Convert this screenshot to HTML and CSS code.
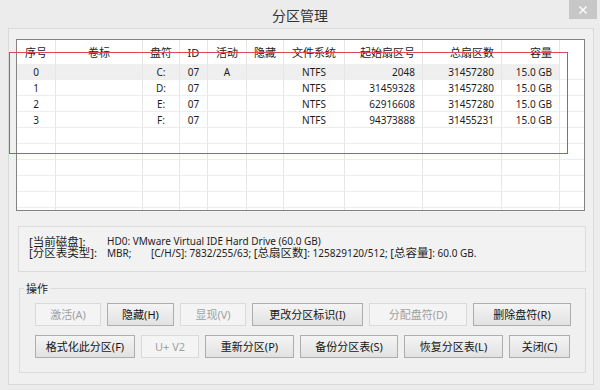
FILE: index.html
```html
<!DOCTYPE html>
<html lang="zh-CN">
<head>
<meta charset="utf-8">
<title>分区管理</title>
<link rel="stylesheet" href="styles.css">
</head>
<body>
<div class="window">
  <header class="titlebar">
    <h1 class="title">分区管理</h1>
    <button class="close" aria-label="关闭"><svg width="10" height="10" viewBox="0 0 10 10"><path d="M1.5 1.5L8.5 8.5M8.5 1.5L1.5 8.5" stroke="#fff" stroke-width="1.4" fill="none"/></svg></button>
  </header>
  <main class="panel">
    <div class="list">
      <div class="row head">
        <div>序号</div><div>卷标</div><div>盘符</div><div>ID</div><div>活动</div><div>隐藏</div><div>文件系统</div><div class="r">起始扇区号</div><div class="r">总扇区数</div><div class="r">容量</div><div class="f"></div>
      </div>
      <div class="row sel">
        <div>0</div><div></div><div>C:</div><div>07</div><div>A</div><div></div><div>NTFS</div><div class="r">2048</div><div class="r">31457280</div><div class="r">15.0 GB</div><div class="f"></div>
      </div>
      <div class="row">
        <div>1</div><div></div><div>D:</div><div>07</div><div></div><div></div><div>NTFS</div><div class="r">31459328</div><div class="r">31457280</div><div class="r">15.0 GB</div><div class="f"></div>
      </div>
      <div class="row">
        <div>2</div><div></div><div>E:</div><div>07</div><div></div><div></div><div>NTFS</div><div class="r">62916608</div><div class="r">31457280</div><div class="r">15.0 GB</div><div class="f"></div>
      </div>
      <div class="row">
        <div>3</div><div></div><div>F:</div><div>07</div><div></div><div></div><div>NTFS</div><div class="r">94373888</div><div class="r">31455231</div><div class="r">15.0 GB</div><div class="f"></div>
      </div>
      <div class="row"><div></div><div></div><div></div><div></div><div></div><div></div><div></div><div></div><div></div><div></div><div class="f"></div></div>
      <div class="row"><div></div><div></div><div></div><div></div><div></div><div></div><div></div><div></div><div></div><div></div><div class="f"></div></div>
      <div class="row"><div></div><div></div><div></div><div></div><div></div><div></div><div></div><div></div><div></div><div></div><div class="f"></div></div>
      <div class="row"><div></div><div></div><div></div><div></div><div></div><div></div><div></div><div></div><div></div><div></div><div class="f"></div></div>
      <div class="row"><div></div><div></div><div></div><div></div><div></div><div></div><div></div><div></div><div></div><div></div><div class="f"></div></div>
      <div class="row"><div></div><div></div><div></div><div></div><div></div><div></div><div></div><div></div><div></div><div></div><div class="f"></div></div>
    </div>

    <div class="info">
      <div class="info-line"><span class="k"><span class="zh">[当前磁盘]:</span></span><span>HD0: VMware Virtual IDE Hard Drive (60.0 GB)</span></div>
      <div class="info-line"><span class="k"><span class="zh">[分区表类型]:</span></span><span><span class="mbr">MBR;</span>[C/H/S]: 7832/255/63; <span class="zh">[总扇区数]</span>: 125829120/512; <span class="zh">[总容量]</span>: 60.0 GB.</span></div>
    </div>

    <fieldset class="ops">
      <legend>操作</legend>
      <div class="btnrow">
        <button class="btn w66" disabled>激活(A)</button>
        <button class="btn w67">隐藏(H)</button>
        <button class="btn w66" disabled>显现(V)</button>
        <button class="btn w111">更改分区标识(I)</button>
        <button class="btn w98" disabled>分配盘符(D)</button>
        <button class="btn w98">删除盘符(R)</button>
      </div>
      <div class="btnrow">
        <button class="btn w100">格式化此分区(F)</button>
        <button class="btn w58" disabled>U+ V2</button>
        <button class="btn w89">重新分区(P)</button>
        <button class="btn w98">备份分区表(S)</button>
        <button class="btn w99">恢复分区表(L)</button>
        <button class="btn w61">关闭(C)</button>
      </div>
    </fieldset>
  </main>
  <div class="mark"></div>
</div>
</body>
</html>
```

FILE: styles.css
```css
* { box-sizing: border-box; margin: 0; padding: 0; }
html, body { width: 600px; height: 390px; overflow: hidden; }
body {
  background: #ececec;
  font-family: "Noto Sans", "Noto Sans CJK SC", sans-serif;
  color: #1e1e1e;
}
.window {
  position: relative;
  width: 600px;
  height: 390px;
  display: flex;
  flex-direction: column;
}
.titlebar {
  height: 28px;
  flex: none;
  display: grid;
  grid-template-columns: 1fr auto 1fr;
  align-items: start;
}
.title {
  grid-column: 2;
  font-family: "Noto Sans CJK SC", sans-serif;
  font-size: 14px;
  font-weight: normal;
  line-height: 16px;
  margin-top: 7px;
  color: #333;
}
.close {
  grid-column: 3;
  justify-self: end;
  width: 28px;
  height: 19px;
  margin-right: 3px;
  background: #c7c7c7;
  border: 0;
  display: flex;
  align-items: center;
  justify-content: center;
}
.panel {
  margin: 0 6px 5px 8px;
  height: 357px;
  border: 1px solid #d9d9d9;
  background: #f0f0f0;
  padding: 10px 0 0 7px;
}
.list {
  width: 569px;
  height: 172px;
  border: 1px solid #838383;
  background: #fff;
  overflow: hidden;
}
.row {
  display: grid;
  grid-template-columns: 39px 87px 37px 28px 39px 37px 61px 78px 79px 58px 1fr;
  height: 16px;
  font-size: 10px;
  line-height: 16px;
}
.row > div {
  border-right: 1px solid #e6e6e6;
  border-bottom: 1px solid #ededed;
  text-align: center;
  white-space: nowrap;
  overflow: hidden;
}
.row.head {
  height: 24px;
  font-size: 11px;
  line-height: 25px;
  color: #222;
}
.row.head > div { border-bottom: 0; }
.row > .r { text-align: right; padding-right: 7px; }
.row > .f { border-right: 0; }
.row.sel > div:not(.f) { background: #efefef; }

.info {
  margin: 15px 0 0 2px;
  width: 568px;
  height: 46px;
  border: 1px solid #dcdcdc;
  background: #f2f2f2;
  padding: 9px 0 0 10px;
  font-size: 10px;
  line-height: 11px;
}
.info-line { display: flex; white-space: nowrap; height: 11px; }
.info .k { width: 78px; flex: none; }
.zh { font-size: 11.5px; line-height: 11px; }
.mbr { display: inline-block; width: 44px; }

.ops {
  margin: 10px 0 0 3px;
  width: 567px;
  min-inline-size: 0;
  border: 1px solid #dcdcdc;
  padding: 8px 0 14px 15px;
}
.ops legend {
  font-size: 11px;
  line-height: 12px;
  padding: 1px 2px 0;
  margin-left: -11px;
  color: #222;
}
.btnrow { display: flex; gap: 6px; }
.btnrow + .btnrow { margin-top: 9px; }
.btn {
  height: 23px;
  font-family: "Noto Sans", "Noto Sans CJK SC", sans-serif;
  font-size: 11px;
  line-height: 21px;
  color: #151515;
  border: 1px solid #adadad;
  background: linear-gradient(#f4f4f4, #e2e2e2);
  padding: 0;
  white-space: nowrap;
}
.btn:disabled {
  border-color: #dadada;
  background: #f4f4f4;
  color: #a0a0a0;
}
.w58 { width: 58px; }
.w61 { width: 61px; }
.w66 { width: 66px; }
.w67 { width: 67px; }
.w89 { width: 89px; }
.w98 { width: 98px; }
.w99 { width: 99px; }
.w100 { width: 100px; }
.w111 { width: 111px; }

.mark {
  position: absolute;
  left: 9px;
  top: 52px;
  width: 559px;
  height: 102px;
  border: 1px solid #dc4856;
  pointer-events: none;
}
```
